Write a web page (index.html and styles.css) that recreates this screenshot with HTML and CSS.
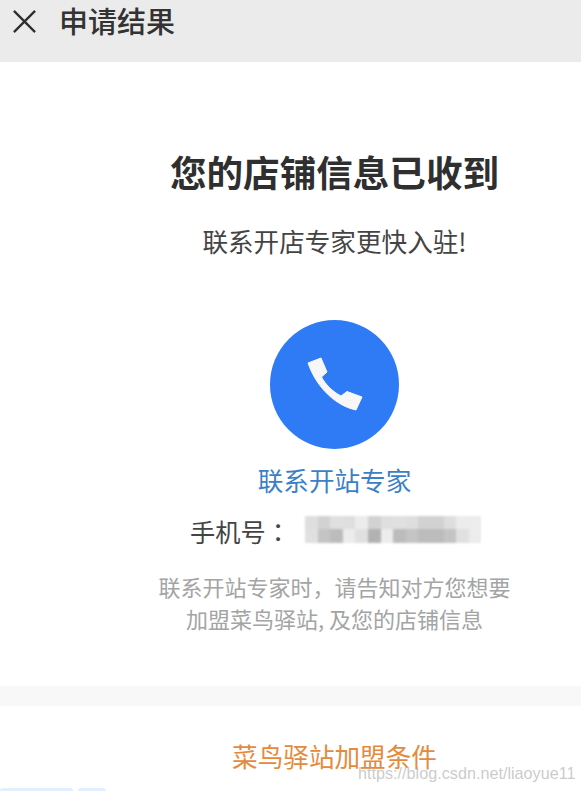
FILE: index.html
```html
<!DOCTYPE html>
<html lang="zh">
<head>
<meta charset="utf-8">
<title>申请结果</title>
<link rel="stylesheet" href="styles.css">
</head>
<body>
<div class="page">
  <header class="bar">
    <svg class="close" viewBox="0 0 26 26" aria-hidden="true"><path d="M2 2 L24 24 M24 2 L2 24"/></svg>
    <h1 class="bar-title">申请结果</h1>
  </header>
  <main class="result">
    <h2 class="heading">您的店铺信息已收到</h2>
    <p class="sub">联系开店专家更快入驻!</p>
    <div class="call">
      <svg viewBox="0 0 56 56" class="phone" aria-hidden="true"><path d="M1 6 L14 1 L20 15 L14.5 20 C18 27 26 35 34 39 L40 34.5 L55 40 L49 53 C30 49 10 32 1 6 Z"/></svg>
    </div>
    <a class="link">联系开站专家</a>
    <div class="mobile">
      <span class="mobile-label">手机号<span lang="zh-TW" class="colon">：</span></span>
      <div class="mosaic" aria-hidden="true">
        <i class="m1"></i><i class="m2"></i><i class="m3"></i><i class="m1"></i><i class="m4"></i><i class="m2"></i><i class="m1"></i><i class="m3"></i><i class="m1"></i><i class="m2"></i><i class="m2"></i><i class="m1"></i><i class="m4"></i><i class="m4"></i>
        <i class="m3"></i><i class="m5"></i><i class="m6"></i><i class="m4"></i><i class="m3"></i><i class="m7"></i><i class="m4"></i><i class="m6"></i><i class="m5"></i><i class="m6"></i><i class="m6"></i><i class="m5"></i><i class="m3"></i><i class="m4"></i>
      </div>
    </div>
    <p class="note">联系开站专家时，请告知对方您想要<br>加盟菜鸟驿站, 及您的店铺信息</p>
  </main>
  <div class="divider"></div>
  <section class="terms">
    <a class="terms-link">菜鸟驿站加盟条件</a>
  </section>
  <div class="chips"><span class="chip chip-wide"></span><span class="chip chip-small"></span></div>
  <span class="watermark">https://blog.csdn.net/liaoyue11</span>
</div>
</body>
</html>
```
FILE: styles.css
```css
* { box-sizing: border-box; }
html, body { margin: 0; padding: 0; background: #fff; }
body { font-family: "Noto Sans CJK SC", "Liberation Sans", sans-serif; }
.page { position: relative; width: 581px; height: 791px; overflow: hidden; display: flex; flex-direction: column; }

.bar { height: 62px; background: #ebebeb; display: flex; align-items: flex-start; padding: 9px 0 0 12px; flex: none; }
.close { width: 25px; height: 25px; fill: none; stroke: #2e2e2e; stroke-width: 2.4; }
.bar-title { margin: -9px 0 0 22px; font-size: 29px; line-height: 40px; font-weight: 500; color: #333; white-space: nowrap; }

.result { height: 624px; flex: none; padding: 87px 0 0 88px; display: flex; flex-direction: column; align-items: center; }
.heading { margin: 0; font-size: 36.6px; line-height: 46px; font-weight: 700; color: #2f2f2f; white-space: nowrap; }
.sub { margin: 27px 0 0; font-size: 25.6px; line-height: 38px; color: #444; white-space: nowrap; }
.call { margin-top: 60px; width: 129px; height: 129px; border-radius: 50%; background: #2f7bf5; display: flex; align-items: center; justify-content: center; flex: none; }
.phone { width: 56px; height: 56px; fill: #f7f7f7; stroke: #f7f7f7; stroke-width: 1; stroke-linejoin: round; margin: 0 0 0 1px; }
.link { margin-top: 12px; font-size: 25.6px; line-height: 38px; color: #3c7fc4; white-space: nowrap; }
.mobile { margin-top: 13px; align-self: flex-start; margin-left: 102px; display: flex; align-items: center; height: 38px; white-space: nowrap; }
.mobile-label { width: 115px; font-size: 25.2px; line-height: 38px; color: #444; }
.colon { font-family: "Noto Sans CJK TC", "Noto Sans CJK SC", sans-serif; }
.mosaic { display: grid; grid-template-columns: repeat(14, 12.6px); grid-auto-rows: 13.5px; width: 176px; margin-top: -4px; filter: blur(1.2px); }
.m1 { background: #dedede; }
.m2 { background: #d2d2d2; }
.m3 { background: #e0e0e0; }
.m4 { background: #ececec; }
.m5 { background: #c4c4c4; }
.m6 { background: #bcbcbc; }
.m7 { background: #b2b2b2; }
.note { margin: 20px 0 0; font-size: 22px; line-height: 32px; color: #a4a4a4; text-align: center; white-space: nowrap; }

.divider { height: 20px; background: #f8f8f8; flex: none; }

.terms { height: 82px; flex: none; padding: 31px 0 0 88px; display: flex; justify-content: center; }
.terms-link { font-size: 25.6px; line-height: 38px; color: #e58a3c; white-space: nowrap; }

.chips { display: flex; gap: 5px; flex: none; }
.chip { display: block; height: 4px; background: #e3effc; border-radius: 3px 3px 0 0; }
.chip-wide { width: 73px; }
.chip-small { width: 28px; }

.watermark { position: absolute; left: 358px; top: 762px; font-family: "Liberation Sans", sans-serif; font-size: 16.2px; line-height: 22px; color: rgba(170, 170, 170, 0.62); white-space: nowrap; }
```
